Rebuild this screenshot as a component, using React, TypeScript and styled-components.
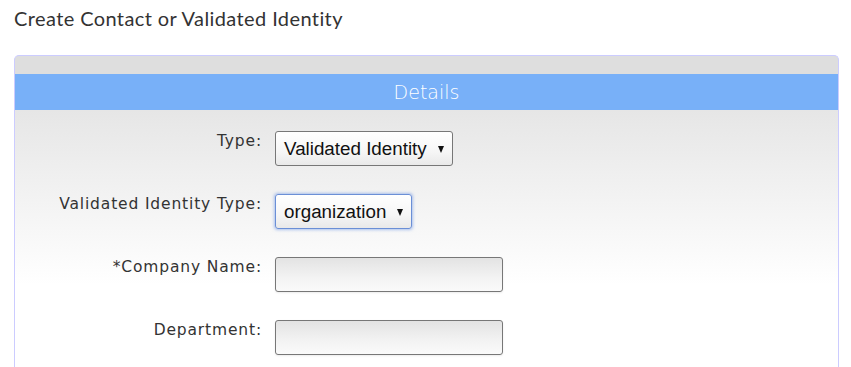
import React from 'react';
import styled, { createGlobalStyle } from 'styled-components';

const GlobalStyle = createGlobalStyle`
  html, body {
    margin: 0;
    padding: 0;
    background: #ffffff;
  }
  body {
    font-family: "Open Sans", "DejaVu Sans", sans-serif;
    color: #333;
  }
`;

const Page = styled.div`
  padding: 8px 12px 0 14px;
`;

const Title = styled.h1`
  margin: 0 0 26px;
  font-family: "Lato", "Open Sans", sans-serif;
  font-size: 20px;
  font-weight: 400;
  letter-spacing: 0.4px;
  color: #333;
  line-height: 21px;
`;

const Panel = styled.div`
  border: 1px solid #ccccff;
  border-bottom: none;
  border-radius: 5px 5px 0 0;
  background: #dedede;
  padding-top: 18px;
  overflow: hidden;
`;

const PanelHeader = styled.div`
  background: #78b0f8;
  color: #ffffff;
  text-align: center;
  font-family: "DejaVu Sans", "Open Sans", sans-serif;
  font-size: 19px;
  font-weight: 300;
  height: 36px;
  line-height: 36px;
`;

const PanelBody = styled.div`
  background: linear-gradient(to bottom, #e6e6e6 0px, #ffffff 175px, #ffffff 100%);
  padding: 21px 0 20px;
  display: flex;
  flex-direction: column;
  gap: 28px;
`;

const Row = styled.div`
  display: grid;
  grid-template-columns: 247px auto;
  column-gap: 13px;
  align-items: start;
`;

const Label = styled.label`
  text-align: right;
  font-family: "DejaVu Sans", "Open Sans", sans-serif;
  font-size: 15.5px;
  letter-spacing: 0.85px;
  color: #333;
  line-height: 20px;
`;

const SelectBox = styled.div<{ $focused?: boolean }>`
  display: inline-flex;
  align-items: center;
  gap: 11px;
  height: 35px;
  box-sizing: border-box;
  padding: 0 8px;
  border: 1px solid ${p => (p.$focused ? '#6b8fd6' : '#777')};
  border-radius: 3px;
  background: linear-gradient(to bottom, #ffffff 0%, #f6f6f6 60%, #e9e9e9 100%);
  box-shadow: ${p => (p.$focused ? '0 0 3px 1px rgba(110, 150, 230, 0.55)' : 'none')};
  font-family: "Liberation Sans", Arial, sans-serif;
  font-size: 18.8px;
  color: #111;
  justify-self: start;
`;

const Caret = styled.span`
  width: 0;
  height: 0;
  border-left: 3.5px solid transparent;
  border-right: 3.5px solid transparent;
  border-top: 7px solid #111;
  margin-top: 1px;
`;

const TextInput = styled.input`
  width: 228px;
  height: 35px;
  box-sizing: border-box;
  border: 1px solid #777;
  border-radius: 3px;
  background: linear-gradient(to bottom, #e3e3e3 0%, #f3f3f3 60%, #fafafa 100%);
  box-shadow: 0 1px 2px rgba(0, 0, 0, 0.08);
  font-family: "Liberation Sans", Arial, sans-serif;
  font-size: 16px;
  padding: 0 6px;
  outline: none;
`;

const App: React.FC = () => {
  return (
    <>
      <GlobalStyle />
      <Page>
        <Title>Create Contact or Validated Identity</Title>
        <Panel>
          <PanelHeader>Details</PanelHeader>
          <PanelBody>
            <Row>
              <Label>Type:</Label>
              <SelectBox>
                Validated Identity <Caret />
              </SelectBox>
            </Row>
            <Row>
              <Label>Validated Identity Type:</Label>
              <SelectBox $focused>
                organization <Caret />
              </SelectBox>
            </Row>
            <Row>
              <Label>*Company Name:</Label>
              <TextInput type="text" />
            </Row>
            <Row>
              <Label>Department:</Label>
              <TextInput type="text" />
            </Row>
          </PanelBody>
        </Panel>
      </Page>
    </>
  );
};

export default App;
